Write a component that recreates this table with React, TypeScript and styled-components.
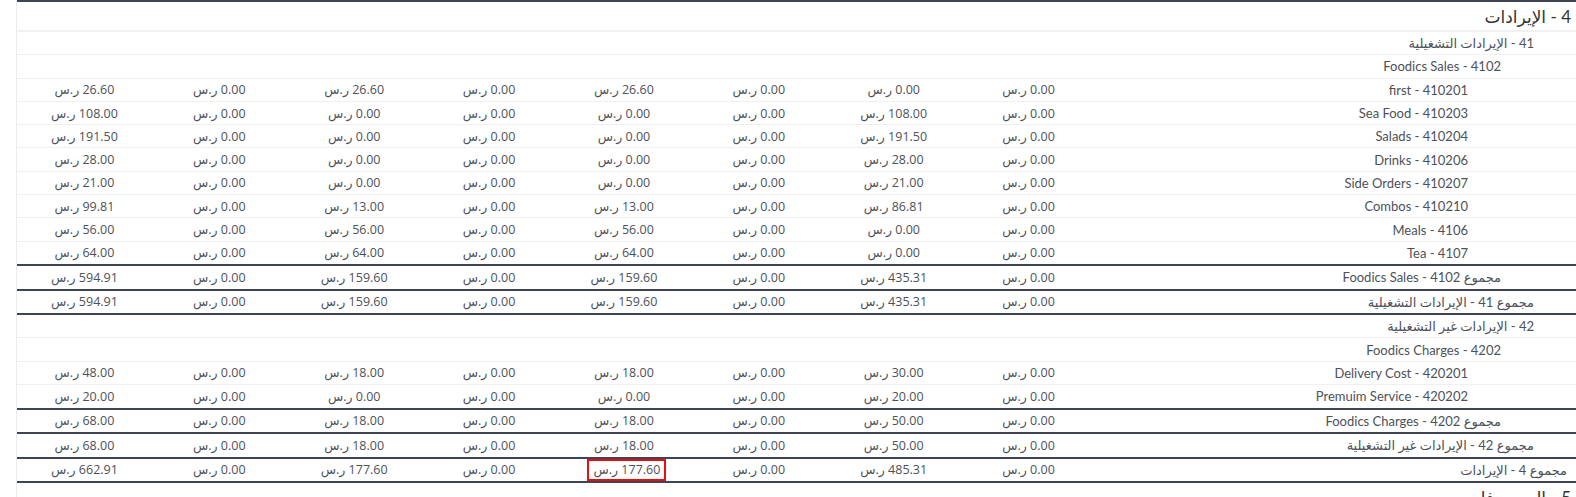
import React from "react";
import styled, { createGlobalStyle, css } from "styled-components";

type Kind = "title" | "group" | "item" | "total";

interface Row {
  kind: Kind;
  level: number;
  label: string;
  values?: string[];
  highlight?: number;
}

// columns read right to left, like the page
const v = (b: string, d: string, h: string) => ["0.00", b, "0.00", d, "0.00", d, "0.00", h];

const rows: Row[] = [
  { kind: "title", level: 0, label: "4 - الإيرادات" },
  { kind: "group", level: 1, label: "41 - الإيرادات التشغيلية" },
  { kind: "group", level: 2, label: "Foodics Sales - 4102" },
  { kind: "item", level: 3, label: "first - 410201", values: v("0.00", "26.60", "26.60") },
  { kind: "item", level: 3, label: "Sea Food - 410203", values: v("108.00", "0.00", "108.00") },
  { kind: "item", level: 3, label: "Salads - 410204", values: v("191.50", "0.00", "191.50") },
  { kind: "item", level: 3, label: "Drinks - 410206", values: v("28.00", "0.00", "28.00") },
  { kind: "item", level: 3, label: "Side Orders - 410207", values: v("21.00", "0.00", "21.00") },
  { kind: "item", level: 3, label: "Combos - 410210", values: v("86.81", "13.00", "99.81") },
  { kind: "item", level: 3, label: "Meals - 4106", values: v("0.00", "56.00", "56.00") },
  { kind: "item", level: 3, label: "Tea - 4107", values: v("0.00", "64.00", "64.00") },
  { kind: "total", level: 2, label: "مجموع Foodics Sales - 4102", values: v("435.31", "159.60", "594.91") },
  { kind: "total", level: 1, label: "مجموع 41 - الإيرادات التشغيلية", values: v("435.31", "159.60", "594.91") },
  { kind: "group", level: 1, label: "42 - الإيرادات غير التشغيلية" },
  { kind: "group", level: 2, label: "Foodics Charges - 4202" },
  { kind: "item", level: 3, label: "Delivery Cost - 420201", values: v("30.00", "18.00", "48.00") },
  { kind: "item", level: 3, label: "Premuim Service - 420202", values: v("20.00", "0.00", "20.00") },
  { kind: "total", level: 2, label: "مجموع Foodics Charges - 4202", values: v("50.00", "18.00", "68.00") },
  { kind: "total", level: 1, label: "مجموع 42 - الإيرادات غير التشغيلية", values: v("50.00", "18.00", "68.00") },
  { kind: "total", level: 0, label: "مجموع 4 - الإيرادات", values: v("485.31", "177.60", "662.91"), highlight: 3 },
  { kind: "title", level: 0, label: "5 - المصروفات" },
];

export default function App() {
  return (
    <>
      <GlobalStyle />
      <Page>
        <Sheet>
          {rows.map((row, i) => {
            const next = rows[i + 1];
            const ruled = row.kind === "total" || (next && next.kind === "total");
            return (
              <Line key={i} $title={row.kind === "title"} $ruled={!!ruled} $first={i === 0}>
                <Label $level={row.level} $title={row.kind === "title"}>
                  {row.label}
                </Label>
                {row.values?.map((val, j) => (
                  <Amount key={j}>
                    <Money $marked={row.highlight === j}>{val} ر.س</Money>
                  </Amount>
                ))}
              </Line>
            );
          })}
        </Sheet>
      </Page>
    </>
  );
}

const GlobalStyle = createGlobalStyle`
  body {
    margin: 0;
    background: #fff;
    font-family: "Open Sans", "DejaVu Sans", sans-serif;
  }
`;

const Page = styled.div`
  padding-left: 16px;
  height: 497px;
  overflow: hidden;
`;

const Sheet = styled.div`
  direction: rtl;
  width: 1560px;
  border-left: 1px solid #ececec;
  color: #4d5158;
`;

const Line = styled.div<{ $title: boolean; $ruled: boolean; $first: boolean }>`
  display: grid;
  grid-template-columns: 481px repeat(8, 1fr);
  align-items: center;
  box-sizing: border-box;
  height: 23.3px;
  border-bottom: 1px solid #f0f0f0;

  ${(p) =>
    p.$title &&
    css`
      height: 30px;
      border-bottom: 2px solid #f1f1f1;
    `}
  ${(p) =>
    p.$first &&
    css`
      height: 32px;
      border-top: 2px solid #3c4657;
    `}
  ${(p) =>
    p.$ruled &&
    css`
      height: 24.5px;
      border-bottom: 2px solid #3c4657;
    `}
`;

const Label = styled.div<{ $level: number; $title: boolean }>`
  font-family: Lato, "DejaVu Sans", sans-serif;
  font-size: ${(p) => (p.$title ? "17px" : "13px")};
  color: ${(p) => (p.$title ? "#333" : "#4d5158")};
  text-align: right;
  padding-right: ${(p) => (p.$title ? 6 : 10 + p.$level * 33)}px;
  white-space: nowrap;
`;

const Amount = styled.div`
  display: flex;
  justify-content: center;
  align-items: center;
  height: 100%;
  font-size: 12.5px;
  white-space: nowrap;
`;

const Money = styled.span<{ $marked: boolean }>`
  display: inline-flex;
  align-items: center;
  box-sizing: border-box;
  ${(p) =>
    p.$marked &&
    css`
      height: 100%;
      margin-left: 5px;
      padding: 0 4px 0 5px;
      border: 2px solid #e8100f;
    `}
`;
